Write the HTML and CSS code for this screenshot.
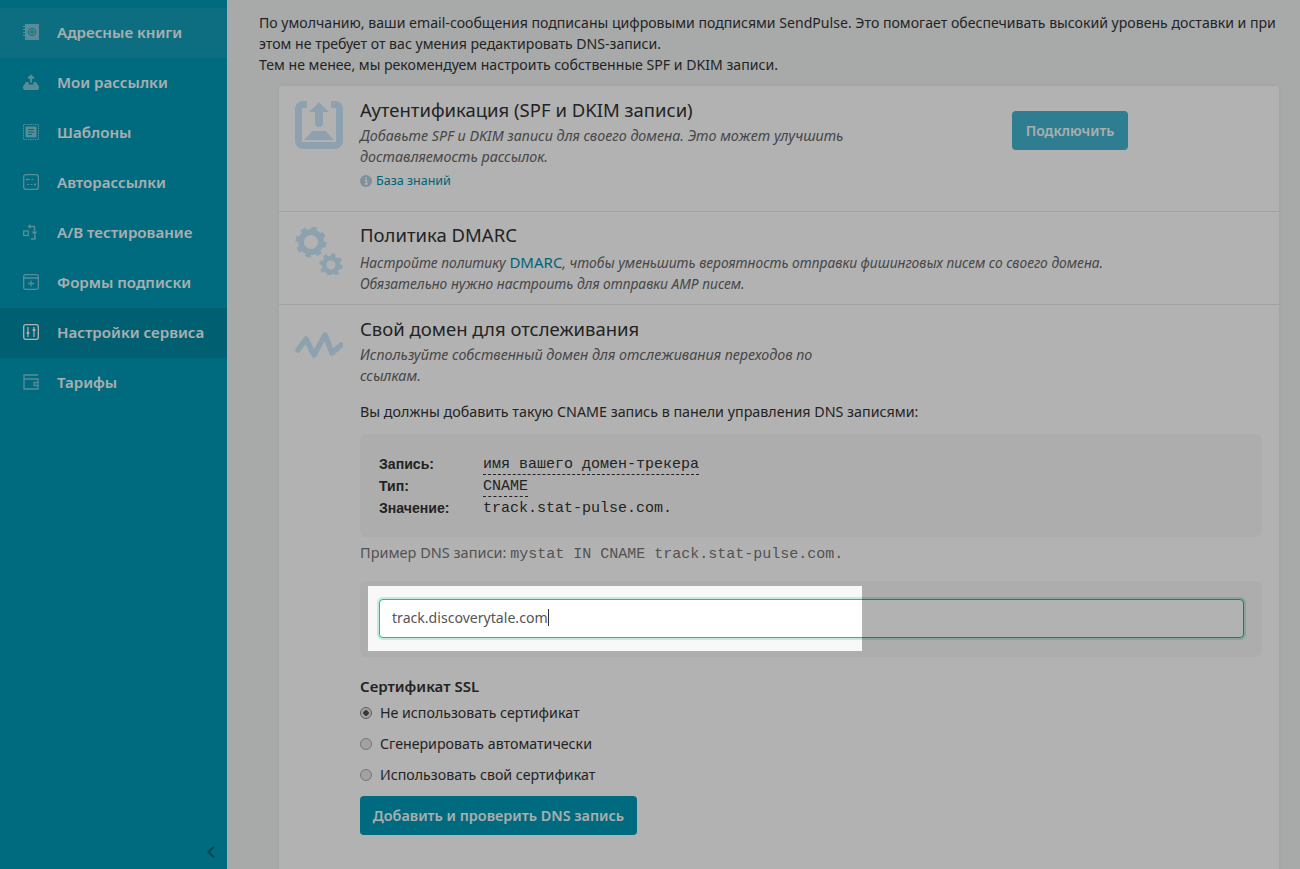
FILE: index.html
```html
<!DOCTYPE html>
<html lang="ru">
<head>
  <meta charset="utf-8">
  <title>Настройки сервиса</title>
  <link rel="stylesheet" href="styles.css">
</head>
<body>
  <div class="page">
    <aside class="sidebar">
      <ul class="menu">
        <li class="menu-item hovered">
          <svg class="menu-icon" viewBox="0 0 16 16"><path d="M2 0h14v16H2z" fill="currentColor"/><path d="M0 2.500h3M0 5.500h3M0 8.500h3M0 11.500h3" stroke="currentColor" fill="none"/><circle cx="9" cy="8" r="3.600" fill="none" stroke="#149db9"/><circle cx="9" cy="8" r="1.300" fill="none" stroke="#149db9"/></svg>
          Адресные книги
        </li>
        <li class="menu-item">
          <svg class="menu-icon" viewBox="0 0 16 16"><path d="M3 8h2.500v1.500a1 1 0 0 0 1 1h3a1 1 0 0 0 1-1V8H13l3 4.500V14a2 2 0 0 1-2 2H2a2 2 0 0 1-2-2v-1.500z" fill="currentColor"/><path d="M8 8.500V2M5.300 4.500 8 1.800l2.700 2.700" stroke="currentColor" stroke-width="2" fill="none"/></svg>
          Мои рассылки
        </li>
        <li class="menu-item">
          <svg class="menu-icon" viewBox="0 0 16 16"><rect x=".5" y=".5" width="15" height="15" fill="none" stroke="currentColor" stroke-dasharray="1.500 .8"/><path d="M2.500 2.500h11v11h-11z" fill="currentColor"/><path d="M5 5.500h6M5 8h6M5 10.500h4" stroke="#0098b6"/></svg>
          Шаблоны
        </li>
        <li class="menu-item">
          <svg class="menu-icon" viewBox="0 0 16 16"><rect x=".7" y=".7" width="14.600" height="14.600" rx="2" fill="none" stroke="currentColor" stroke-width="1.300"/><path d="M5 5.500h7M4 10.500h7" stroke="currentColor" stroke-dasharray="2 1.500"/><circle cx="4" cy="5.500" r="1.100" fill="currentColor"/><circle cx="12" cy="10.500" r="1.100" fill="currentColor"/></svg>
          Авторассылки
        </li>
        <li class="menu-item">
          <svg class="menu-icon" viewBox="0 0 16 16"><rect x=".7" y="7" width="4.500" height="4.500" fill="none" stroke="currentColor" stroke-width="1.300"/><path d="M5.500 2.500h6V7M8 15h4v-4" fill="none" stroke="currentColor" stroke-width="1.500"/><path d="M8.500 7.500h6l-3 3.500z" fill="currentColor"/><path d="M7.500 0v5l-3-2.500z" fill="currentColor"/></svg>
          A/B тестирование
        </li>
        <li class="menu-item">
          <svg class="menu-icon" viewBox="0 0 16 16"><rect x=".7" y=".7" width="14.600" height="14.600" rx="1.500" fill="none" stroke="currentColor" stroke-width="1.300"/><path d="M1 4h14M8 6.500v6M5 9.500h6" stroke="currentColor" stroke-width="1.300" fill="none"/></svg>
          Формы подписки
        </li>
        <li class="menu-item active">
          <svg class="menu-icon" viewBox="0 0 16 16"><rect x=".7" y=".7" width="14.600" height="14.600" rx="2" fill="none" stroke="currentColor" stroke-width="1.300"/><path d="M5 3v10M11 3v10" stroke="currentColor" stroke-width="1.200"/><path d="M3.700 9h2.600M9.700 6h2.600" stroke="currentColor" stroke-width="2"/></svg>
          Настройки сервиса
        </li>
        <li class="menu-item">
          <svg class="menu-icon" viewBox="0 0 16 16"><path d="M15 1H1v14h14V5H1" fill="none" stroke="currentColor" stroke-width="1.300"/><path d="M15 8.500h-4v3h4" fill="none" stroke="currentColor" stroke-width="1.300"/></svg>
          Тарифы
        </li>
      </ul>
      <svg class="collapse" viewBox="0 0 10 14"><path d="M8 1.500 2.500 7 8 12.500" fill="none" stroke="currentColor" stroke-width="2"/></svg>
    </aside>

    <main class="content">
      <p class="intro">По умолчанию, ваши email-сообщения подписаны цифровыми подписями SendPulse. Это помогает обеспечивать высокий уровень доставки и при этом не требует от вас умения редактировать DNS-записи.<br>Тем не менее, мы рекомендуем настроить собственные SPF и DKIM записи.</p>

      <section class="card">
        <div class="row row-auth">
          <svg class="row-icon" viewBox="0 0 48 48"><path d="M12 3.500H8A4.500 4.500 0 0 0 3.500 8v32A4.500 4.500 0 0 0 8 44.500h32a4.500 4.500 0 0 0 4.500-4.500V8A4.500 4.500 0 0 0 40 3.500h-4" fill="none" stroke="currentColor" stroke-width="7"/><path d="M24 1 34 11h-6v11a4 4 0 0 1-8 0V11h-6z" fill="currentColor"/><path d="M17.500 30h13L39 39H9z" fill="currentColor"/></svg>
          <div class="row-body narrow">
            <h3 class="row-title">Аутентификация (SPF и DKIM записи)</h3>
            <p class="row-text">Добавьте SPF и DKIM записи для своего домена. Это может улучшить доставляемость рассылок.</p>
            <a class="help-link" href="#">
              <svg class="info-icon" viewBox="0 0 12 12"><circle cx="6" cy="6" r="6" fill="currentColor"/><path d="M6 2.200v1.800M4.800 5.500H6.500v3.300M4.600 9h3.200" stroke="#fff" stroke-width="1.300" fill="none"/></svg>
              База знаний
            </a>
          </div>
          <button class="btn btn-light">Подключить</button>
        </div>

        <div class="row row-dmarc">
          <svg class="row-icon" viewBox="0 0 48 48">
            <circle cx="16" cy="15" r="10" fill="none" stroke="currentColor" stroke-width="6"/>
            <circle cx="16" cy="15" r="13.500" fill="none" stroke="currentColor" stroke-width="4" stroke-dasharray="5.300 5.300"/>
            <circle cx="36" cy="38" r="7" fill="none" stroke="currentColor" stroke-width="5"/>
            <circle cx="36" cy="38" r="10" fill="none" stroke="currentColor" stroke-width="3.500" stroke-dasharray="3.900 3.950"/>
          </svg>
          <div class="row-body">
            <h3 class="row-title">Политика DMARC</h3>
            <p class="row-text">Настройте политику <a href="#">DMARC</a>, чтобы уменьшить вероятность отправки фишинговых писем со своего домена.<br>Обязательно нужно настроить для отправки AMP писем.</p>
          </div>
        </div>

        <div class="row row-domain">
          <svg class="row-icon wave" viewBox="0 0 48 26"><path d="M3 18 11 7l8 16L30 3l7 18 9-8" fill="none" stroke="currentColor" stroke-width="5.500" stroke-linecap="round" stroke-linejoin="round"/></svg>
          <div class="row-body">
            <h3 class="row-title">Свой домен для отслеживания</h3>
            <p class="row-text narrow">Используйте собственный домен для отслеживания переходов по ссылкам.</p>
            <p class="plain">Вы должны добавить такую CNAME запись в панели управления DNS записями:</p>

            <div class="dns-box">
              <div class="dns-line"><b>Запись:</b><code class="dashed">имя вашего домен-трекера</code></div>
              <div class="dns-line"><b>Тип:</b><code class="dashed">CNAME</code></div>
              <div class="dns-line"><b>Значение:</b><code>track.stat-pulse.com.</code></div>
            </div>
            <p class="example">Пример DNS записи: <code>mystat IN CNAME track.stat-pulse.com.</code></p>

            <div class="input-box">
              <div class="input">track.discoverytale.com<span class="caret"></span></div>
            </div>

            <h4 class="ssl-title">Сертификат SSL</h4>
            <label class="radio"><span class="dot checked"></span>Не использовать сертификат</label>
            <label class="radio"><span class="dot"></span>Сгенерировать автоматически</label>
            <label class="radio"><span class="dot"></span>Использовать свой сертификат</label>
            <button class="btn btn-main">Добавить и проверить DNS запись</button>
          </div>
        </div>
      </section>
    </main>
  </div>

  <div class="spotlight"></div>
</body>
</html>
```

FILE: styles.css
```css
* {
  box-sizing: border-box;
}

html, body {
  height: 100%;
  margin: 0;
  overflow: hidden;
}

body {
  background-color: #f1f4f4;
  color: #333;
  font-family: "Noto Sans", Arial, sans-serif;
  font-size: 14.100px;
  line-height: 21px;
}

.page {
  display: flex;
  height: 869px;
}

/* sidebar */
.sidebar {
  position: relative;
  flex: 0 0 227px;
  padding-top: 8px;
  background-color: #0098b6;
}

.menu {
  list-style: none;
  margin: 0;
  padding: 0;
}

.menu-item {
  display: flex;
  align-items: center;
  gap: 18px;
  height: 50px;
  padding: 0 0 2px 23px;
  color: #f2fafb;
  font-size: 15.100px;
  font-weight: 600;
}

.menu-item.hovered {
  background-color: #149db9;
}

.menu-item.active {
  background-color: #008aa4;
}

.menu-icon {
  flex: none;
  width: 16px;
  height: 16px;
  color: #7fcbda;
}

.active .menu-icon {
  color: #fff;
}

.collapse {
  position: absolute;
  right: 11px;
  bottom: 10px;
  width: 10px;
  height: 14px;
  color: #00637a;
}

/* content */
.content {
  flex: 1;
  min-width: 0;
  padding: 12px 20px 0 32px;
}

.intro {
  margin: 0;
}

.card {
  width: 1000px;
  height: 800px;
  margin: 11px 0 0 20px;
  background-color: #fff;
  border-radius: 4px;
  box-shadow: 0 0 4px rgba(0, 0, 0, 0.06);
}

.row {
  display: flex;
  gap: 17px;
  padding: 15px 17px 0 16px;
  border-bottom: 1px solid #e6eaea;
}

.row-auth {
  height: 126px;
}

.row-dmarc {
  height: 93px;
}

.row-domain {
  border-bottom: none;
}

.row-icon {
  flex: none;
  width: 48px;
  height: 48px;
  color: #cbe8fa;
}

.row-icon.wave {
  height: 26px;
  margin-top: 12px;
}

.row-body {
  flex: 1;
  min-width: 0;
  margin-top: -1px;
}

.narrow {
  max-width: 500px;
}

.row-auth .row-body {
  flex: 0 0 500px;
}

.row-title {
  margin: 0 0 5px;
  color: #333;
  font-size: 18.500px;
  font-weight: 400;
  line-height: 20px;
}

.row-dmarc .row-body {
  margin-top: -2px;
}

.row-dmarc .row-title {
  margin-bottom: 7px;
}

.row-text {
  margin: 0;
  color: #666;
  font-size: 14.300px;
  font-style: italic;
}

.row-dmarc .row-text {
  font-size: 13.800px;
}

.row-text a {
  color: #008fab;
  font-size: 15px;
  font-style: normal;
  text-decoration: none;
}

.help-link {
  display: inline-flex;
  align-items: center;
  gap: 4px;
  margin-top: 3px;
  color: #008fab;
  font-size: 12.500px;
  text-decoration: none;
}

.info-icon {
  width: 12px;
  height: 12px;
  color: #b5d0de;
}

.btn {
  height: 39px;
  padding: 0 13px;
  border: none;
  border-radius: 4px;
  color: #f2fafb;
  font-family: inherit;
  font-size: 14px;
  font-weight: 600;
}

.btn-light {
  flex: none;
  align-self: flex-start;
  width: 116px;
  margin: 10px 0 0 135px;
  padding: 0;
  background-color: #42b4d0;
}

.btn-main {
  display: block;
  width: 277px;
  margin-top: 11px;
  padding: 0;
  background-color: #0098b6;
  font-size: 14.400px;
}

.plain {
  margin: 15px 0 12px;
  font-size: 14.300px;
}

.dns-box {
  padding: 20px 19px 17px;
  background-color: #f8f8f8;
  border-radius: 6px;
}

.dns-line {
  display: flex;
  height: 22px;
}

.dns-line b {
  flex: 0 0 104px;
  font-family: "Liberation Sans", Arial, sans-serif;
  font-weight: 700;
}

code {
  font-family: "Liberation Mono", "Courier New", monospace;
  font-size: 15px;
}

.dashed {
  height: 21px;
  border-bottom: 1px dashed #333;
}

.example {
  margin: 5px 0 16px;
  color: #777;
  font-size: 14.500px;
}

.input-box {
  padding: 18px 18px 19px 19px;
  background-color: #f8f8f8;
  border-radius: 6px;
}

.input {
  display: flex;
  align-items: center;
  height: 39px;
  padding: 0 0 2px 12px;
  background-color: #fff;
  border: 1px solid #1fbf8c;
  border-radius: 4px;
  box-shadow: 0 0 0 2px rgba(31, 191, 140, 0.25);
  color: #555;
}

.caret {
  width: 1px;
  height: 17px;
  background-color: #333;
}

.ssl-title {
  margin: 19px 0 5px;
  font-size: 15px;
  font-weight: 600;
  line-height: 21px;
}

.radio {
  display: flex;
  align-items: center;
  gap: 8px;
  height: 21px;
  margin-bottom: 10px;
  font-size: 14.200px;
}

.radio:last-of-type {
  margin-bottom: 0;
}

.dot {
  flex: none;
  width: 12px;
  height: 12px;
  background-color: #e9e9e9;
  border: 1px solid #aaa;
  border-radius: 50%;
}

.dot.checked {
  background: radial-gradient(circle, #555 0 2.500px, #e9e9e9 3px);
  border-color: #888;
}

/* dims the whole page except the highlighted part of the input */
.spotlight {
  position: absolute;
  left: 368px;
  top: 586px;
  width: 494px;
  height: 65px;
  box-shadow: 0 0 0 2000px rgba(0, 0, 0, 0.3);
}
```
